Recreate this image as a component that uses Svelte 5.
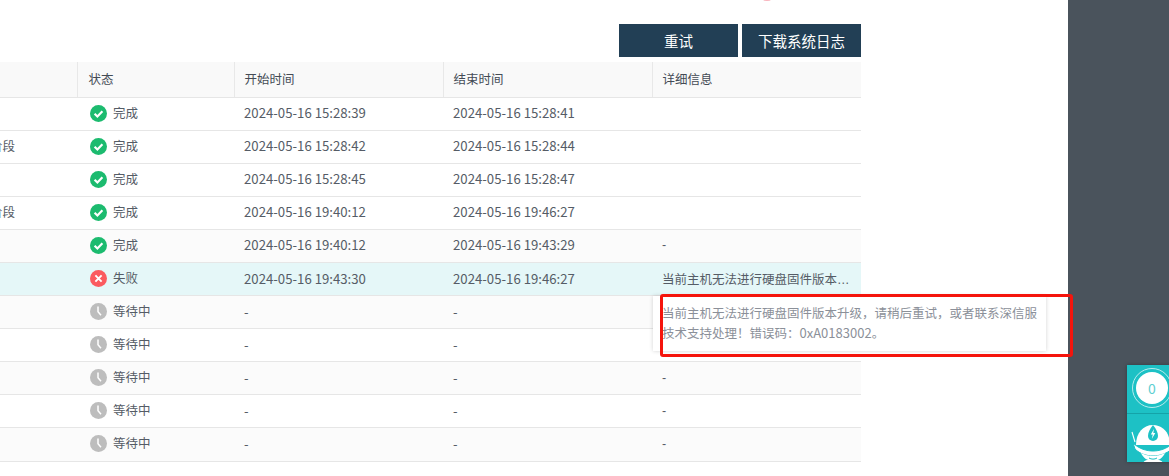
<script>
  const done = { status: 'ok', label: '完成' };
  const wait = { status: 'wait', label: '等待中' };
  const rows = [
    { ...done, name: '', start: '2024-05-16 15:28:39', end: '2024-05-16 15:28:41', info: '' },
    { ...done, name: '准备硬盘固件升级阶段', start: '2024-05-16 15:28:42', end: '2024-05-16 15:28:44', info: '' },
    { ...done, name: '', start: '2024-05-16 15:28:45', end: '2024-05-16 15:28:47', info: '' },
    { ...done, name: '准备硬盘固件升级阶段', start: '2024-05-16 19:40:12', end: '2024-05-16 19:46:27', info: '' },
    { ...done, name: '', start: '2024-05-16 19:40:12', end: '2024-05-16 19:43:29', info: '-' },
    { status: 'fail', label: '失败', name: '', start: '2024-05-16 19:43:30', end: '2024-05-16 19:46:27', info: '当前主机无法进行硬盘固件版本升级，请稍后重试，或者联系深信服技术支持处理！错误码：0xA0183002。', active: true },
    { ...wait, name: '', start: '-', end: '-', info: '-' },
    { ...wait, name: '', start: '-', end: '-', info: '-' },
    { ...wait, name: '', start: '-', end: '-', info: '-' },
    { ...wait, name: '', start: '-', end: '-', info: '-' },
    { ...wait, name: '', start: '-', end: '-', info: '-' }
  ];
</script>

<div class="page">
  <main class="content">
    <span class="spot"></span>
    <div class="toolbar">
      <button type="button" class="btn">重试</button>
      <button type="button" class="btn">下载系统日志</button>
    </div>

    <div class="table-wrap">
      <table class="task-table">
        <colgroup>
          <col class="col-name" />
          <col class="col-status" />
          <col class="col-time" />
          <col class="col-time" />
          <col class="col-info" />
        </colgroup>
        <thead>
          <tr>
            <th></th>
            <th>状态</th>
            <th>开始时间</th>
            <th>结束时间</th>
            <th>详细信息</th>
          </tr>
        </thead>
        <tbody>
          {#each rows as row}
            <tr class:active={row.active}>
              <td class="name">{row.name}</td>
              <td class="state">
                <span class="status">
                  {#if row.status === 'ok'}
                    <svg viewBox="0 0 17 17" width="17" height="17">
                      <circle cx="8.5" cy="8.5" r="8.5" fill="#1cbb6f" />
                      <path d="M4.6 8.8l2.8 2.7 5-5.2" fill="none" stroke="#fff" stroke-width="2.2" />
                    </svg>
                  {:else if row.status === 'fail'}
                    <svg viewBox="0 0 17 17" width="17" height="17">
                      <circle cx="8.5" cy="8.5" r="8.5" fill="#fb5a5f" />
                      <path d="M5.4 5.4l6.2 6.2M11.6 5.4l-6.2 6.2" fill="none" stroke="#fff" stroke-width="1.9" />
                    </svg>
                  {:else}
                    <svg viewBox="0 0 17 17" width="17" height="17">
                      <circle cx="8.5" cy="8.5" r="8.5" fill="#bdbdbd" />
                      <path d="M8 3.4v5.4l3 3.4" fill="none" stroke="#fff" stroke-width="1.5" />
                    </svg>
                  {/if}
                  {row.label}
                </span>
              </td>
              <td class="time">{row.start}</td>
              <td class="time">{row.end}</td>
              <td class="info">{row.info}</td>
            </tr>
          {/each}
        </tbody>
      </table>

      <div class="tooltip">当前主机无法进行硬盘固件版本升级，请稍后重试，或者联系深信服技术支持处理！错误码：<span class="code">0xA0183002</span>。</div>
    </div>

    <div class="annotation"></div>
  </main>

  <aside class="side">
    <div class="widget">
      <div class="count"><span>0</span></div>
      <div class="avatar">
        <svg viewBox="0 0 42 38" width="42" height="38">
          <path d="M9 20C9 8 16 0 26 0s17 8 17 20z" fill="#fff" />
          <path d="M26 0c3.500 4 5 8 5 11a5 5 0 0 1-10 0c0-3 1.500-7 5-11z" fill="#1dc1c5" />
          <path d="M27 4l-3.200 5.500h2l-1 4.500 3.500-6h-2z" fill="#fff" />
          <path d="M6 18c6 6 14 8 20 8s14-2 20-8l-1 6c-6 5-13 7-19 7s-13-2-18-7z" fill="#fff" stroke="#1dc1c5" stroke-width="1" />
          <path d="M14 28c2 5 7 8 12 8s10-3 12-8c-4 2-8 3-12 3s-8-1-12-3z" fill="#fff" />
          <path d="M22 33c2.500 1.500 5.500 1.500 8 0" fill="none" stroke="#1dc1c5" stroke-width="1" />
          <path d="M16 38c1-2 3-3 5-3h10c2 0 4 1 5 3z" fill="#fff" />
          <path d="M5 7l3 10" fill="none" stroke="#fff" stroke-width="1.100" />
        </svg>
      </div>
    </div>
  </aside>
</div>

<style>
  :global(body) {
    margin: 0;
    background: #fff;
    overflow: hidden;
  }

  .page {
    display: flex;
    height: 476px;
    overflow: hidden;
    font-family: "Noto Sans CJK SC", "Open Sans", sans-serif;
    font-size: 12.5px;
    color: #555c66;
  }

  .content {
    position: relative;
    width: 1068px;
    flex: none;
    background: #fff;
    overflow: visible;
    z-index: 1;
  }

  .spot {
    position: absolute;
    left: 763px;
    top: -2px;
    width: 8px;
    height: 3px;
    border-radius: 50%;
    background: #f9b4bd;
  }

  .toolbar {
    display: flex;
    justify-content: flex-end;
    gap: 4px;
    width: 861px;
    padding-top: 24px;
    margin-bottom: 5px;
  }

  .btn {
    width: 119px;
    height: 33px;
    padding: 0;
    border: none;
    background: #223f55;
    color: #fff;
    font-family: inherit;
    font-size: 14.5px;
  }

  .table-wrap {
    position: relative;
    width: 861px;
  }

  .task-table {
    width: 861px;
    border-collapse: collapse;
    table-layout: fixed;
  }

  .col-name { width: 77px; }
  .col-status { width: 157px; }
  .col-time { width: 209px; }
  .col-info { width: 209px; }

  th {
    height: 35px;
    padding: 0 10px 2px;
    box-sizing: border-box;
    background: #f9f9f9;
    border-bottom: 1px solid #e6e6e6;
    border-left: 1px solid #e8e8e8;
    color: #444b55;
    font-weight: 400;
    text-align: left;
  }

  th:first-child {
    border-left: none;
  }

  th:nth-child(2) {
    padding-left: 11px;
  }

  td {
    height: 33.1px;
    padding: 0 10px 2px;
    box-sizing: border-box;
    border-bottom: 1px solid #e6e6e6;
    white-space: nowrap;
    overflow: hidden;
    text-overflow: ellipsis;
  }

  td.state {
    padding-bottom: 0;
  }

  td.time {
    font-size: 13.2px;
  }

  tbody tr:nth-child(odd):nth-child(n+5) td {
    background: #fbfbfb;
  }

  tbody tr.active td {
    background: #e5f7f8;
  }

  td.name {
    padding: 0 62px 2px 0;
    direction: rtl;
    text-overflow: clip;
    text-align: left;
  }

  td.info {
    padding: 0 10px 1px;
    font-family: "Liberation Sans", "Noto Sans CJK SC", sans-serif;
    color: #555c66;
  }

  .status {
    display: inline-flex;
    align-items: center;
    gap: 6px;
    margin-left: 3px;
  }

  .status svg {
    position: relative;
    top: 1px;
  }

  .tooltip {
    position: absolute;
    left: 653px;
    top: 234px;
    box-sizing: border-box;
    width: 393px;
    height: 55px;
    padding: 7px 8px 7px 9px;
    background: #fff;
    box-shadow: 0 0 4px rgba(0, 0, 0, 0.18);
    color: #8b9099;
    line-height: 20px;
  }

  .code {
    font-size: 13px;
  }

  .annotation {
    position: absolute;
    left: 660px;
    top: 294px;
    box-sizing: border-box;
    width: 413px;
    height: 63px;
    border: 3px solid #f5140c;
    border-radius: 3px;
  }

  .side {
    position: relative;
    flex: 1;
    background: #4a535c;
  }

  .widget {
    position: absolute;
    left: 59px;
    top: 365px;
    width: 60px;
    height: 97px;
    background: #1dc1c5;
    box-shadow: 0 0 4px rgba(0, 0, 0, 0.3);
  }

  .count {
    box-sizing: border-box;
    display: flex;
    align-items: center;
    justify-content: center;
    width: 40px;
    height: 40px;
    margin: 3px 0 0 5px;
    border: 1px solid #b8ecee;
    border-radius: 50%;
  }

  .count span {
    display: block;
    width: 32px;
    height: 32px;
    border-radius: 50%;
    background: #fff;
    color: #5fcfd2;
    font-size: 14px;
    line-height: 32px;
    text-align: center;
  }

  .avatar {
    margin-top: 5px;
    height: 49px;
    border-top: 1px solid #14a3a8;
    padding-top: 11px;
    box-sizing: border-box;
    overflow: hidden;
  }

  .avatar svg {
    display: block;
    overflow: visible;
  }
</style>
